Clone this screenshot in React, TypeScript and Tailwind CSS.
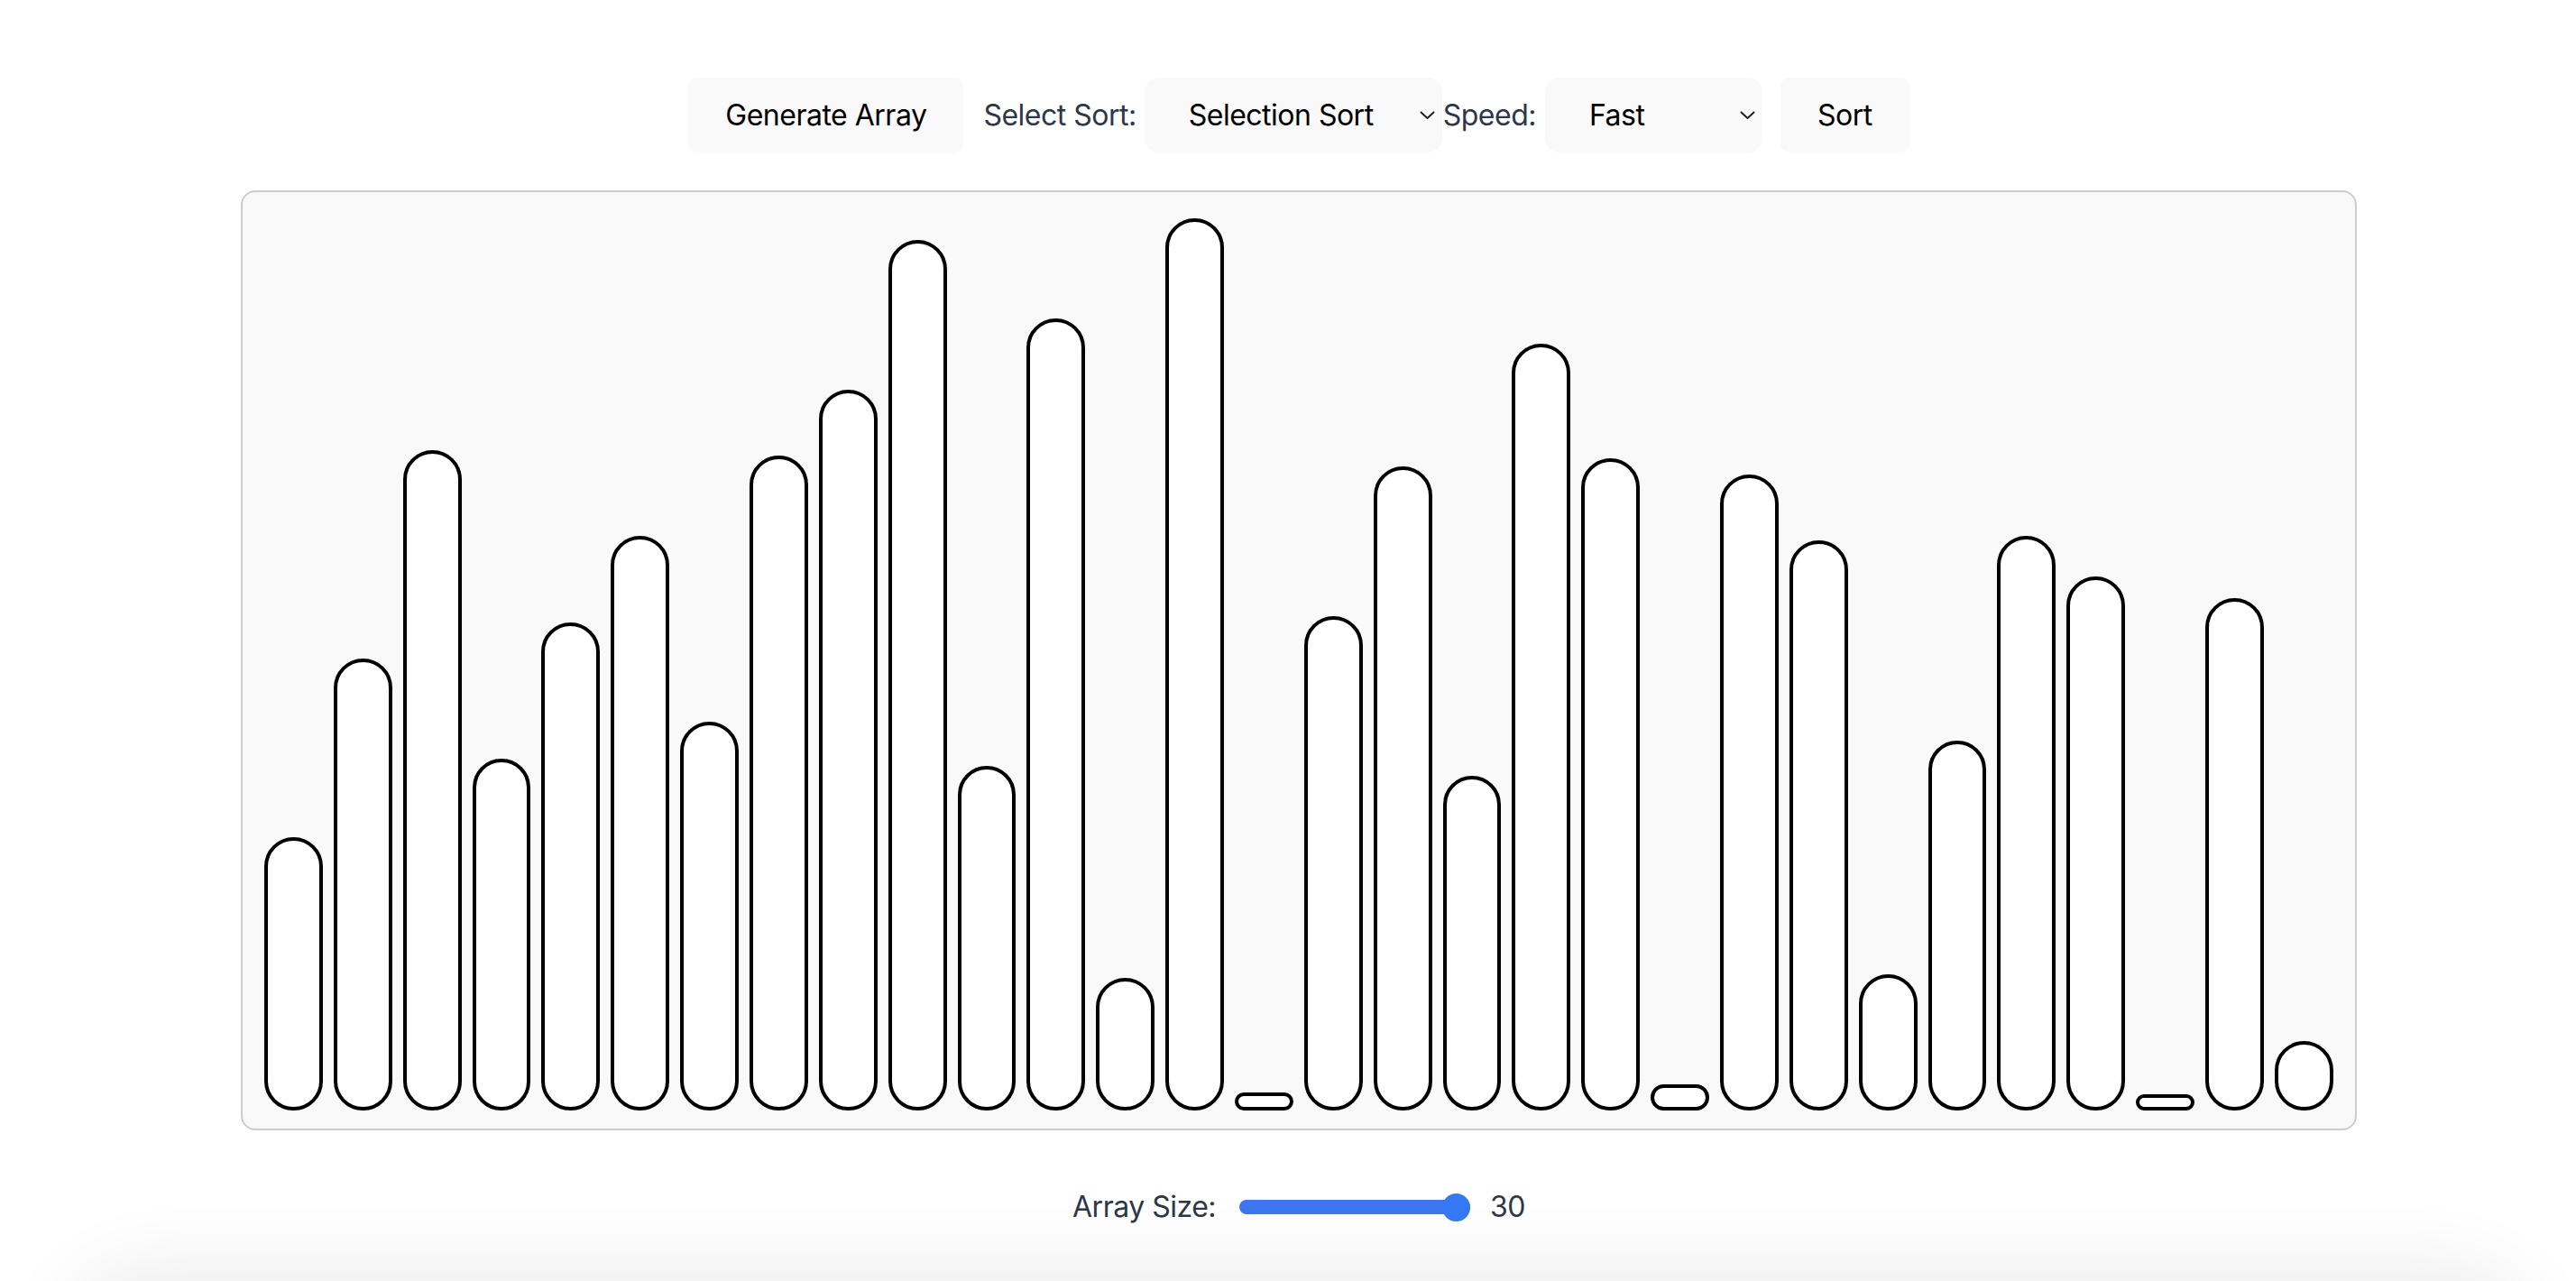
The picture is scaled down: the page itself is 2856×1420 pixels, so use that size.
import {useState} from "react";

const heights = [
    303, 501, 732, 390, 541, 637, 431, 726, 799, 965,
    382, 878, 147, 989, 20, 548, 714, 371, 850, 723,
    29, 705, 632, 151, 410, 637, 592, 18, 568, 77,
];

function Chevron() {
    return (
        <svg width="17" height="10" viewBox="0 0 17 10" fill="none"
             className="pointer-events-none absolute right-[8px] top-1/2 -translate-y-1/2">
            <path d="M1.5 1.5 L8.5 8 L15.5 1.5" stroke="#1f1f1f" strokeWidth="2" strokeLinecap="round"
                  strokeLinejoin="round"/>
        </svg>
    );
}

export default function App() {
    const [algo, setAlgo] = useState("selection");
    const [speed, setSpeed] = useState("fast");

    return (
        <div className="h-[1420px] overflow-hidden bg-white pl-[24px] font-['Inter',sans-serif] tracking-[-0.5px]">

            {/* Controls */}
            <div className="flex items-center justify-center pt-[86px] text-[32px] leading-none">
                <button className="h-[83px] rounded-[10px] bg-[#f9f9f9] px-[41px] text-black">
                    Generate Array
                </button>
                <label className="ml-[22px] mr-[9px] text-[#2d3748]">Select Sort:</label>
                <div className="relative">
                    <select value={algo} onChange={e => setAlgo(e.target.value)}
                            className="h-[83px] w-[330px] appearance-none rounded-[16px] bg-[#f9f9f9] pl-[49px] text-black outline-none">
                        <option value="bubble">Bubble Sort</option>
                        <option value="selection">Selection Sort</option>
                        <option value="insertion">Insertion Sort</option>
                        <option value="merge">Merge Sort</option>
                        <option value="quick">Quick Sort</option>
                    </select>
                    <Chevron/>
                </div>
                <label className="ml-[1px] mr-[10px] text-[#2d3748]">Speed:</label>
                <div className="relative">
                    <select value={speed} onChange={e => setSpeed(e.target.value)}
                            className="h-[83px] w-[241px] appearance-none rounded-[16px] bg-[#f9f9f9] pl-[49px] text-black outline-none">
                        <option value="slow">Slow</option>
                        <option value="medium">Medium</option>
                        <option value="fast">Fast</option>
                    </select>
                    <Chevron/>
                </div>
                <button className="ml-[20px] h-[83px] rounded-[10px] bg-[#f9f9f9] px-[41px] text-black">
                    Sort
                </button>
            </div>

            {/* Bars */}
            <div
                className="mx-auto mt-[42px] flex h-[1042px] w-[2346px] items-end gap-[12px] rounded-[16px] border-2 border-[#cccccc] bg-[#f9f9f9] px-[24px] pb-[20px]">
                {heights.map((h, i) => (
                    <div key={i} className="flex-1 rounded-full border-[4px] border-black bg-white"
                         style={{height: h}}/>
                ))}
            </div>

            {/* Array size */}
            <div className="mt-[65px] flex h-[40px] items-center justify-center text-[32px] text-[#2d3748]">
                <span>Array Size:</span>
                <div className="ml-[26px] flex h-[16px] w-[256px] items-center justify-end rounded-full bg-[#3b78ed]">
                    <div className="h-[31px] w-[31px] shrink-0 rounded-full bg-[#3478f6]"/>
                </div>
                <span className="ml-[22px]">30</span>
            </div>

            <div
                className="mx-auto mt-[72px] h-[200px] w-[2700px] rounded-[80px] bg-[#ebebeb] shadow-[0_0_80px_30px_rgba(0,0,0,0.07)]"/>
        </div>
    );
}
